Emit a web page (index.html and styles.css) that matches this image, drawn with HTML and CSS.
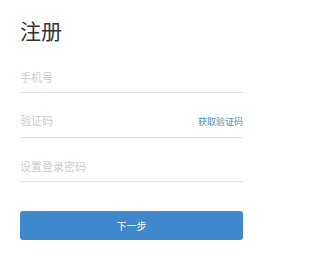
FILE: index.html
```html
<!DOCTYPE html>
<html lang="zh-CN">
<head>
<meta charset="utf-8">
<title>注册</title>
<link rel="stylesheet" href="styles.css">
</head>
<body>
<div class="page">
  <h1 class="title">注册</h1>
  <form class="form">
    <div class="field field-first">
      <input class="input" type="text" placeholder="手机号">
    </div>
    <div class="field">
      <input class="input" type="text" placeholder="验证码">
      <a class="code-link" href="#">获取验证码</a>
    </div>
    <div class="field">
      <input class="input" type="password" placeholder="设置登录密码">
    </div>
    <button class="next-btn" type="button">下一步</button>
  </form>
</div>
</body>
</html>
```

FILE: styles.css
```css
html, body {
  margin: 0;
  padding: 0;
  background: #ffffff;
}
body {
  font-family: "Noto Sans CJK SC", "Noto Sans", sans-serif;
}
.page {
  width: 264px;
  box-sizing: border-box;
  padding: 16px 21px 0 20px;
}
.title {
  margin: 0;
  font-size: 21px;
  line-height: 29px;
  font-weight: 400;
  color: #333333;
}
.form {
  display: flex;
  flex-direction: column;
}
.field {
  display: flex;
  align-items: baseline;
  height: 44.5px;
  box-sizing: border-box;
  padding-bottom: 8px;
  border-bottom: 1px solid #e3e3e3;
  align-content: flex-end;
  flex-wrap: wrap;
}
.field-first {
  height: 48px;
}
.input {
  flex: 1;
  min-width: 0;
  border: none;
  outline: none;
  background: transparent;
  padding: 0;
  margin: 0;
  font-family: inherit;
  font-size: 11px;
  line-height: 14px;
  height: 14px;
  color: #333;
}
.input::placeholder {
  color: #cccccc;
}
.code-link {
  font-size: 9px;
  line-height: 14px;
  color: #3a8fb8;
  text-decoration: none;
}
.next-btn {
  margin-top: 29px;
  height: 29px;
  border: none;
  border-radius: 3px;
  background: #3f88cc;
  color: #ffffff;
  font-family: inherit;
  font-size: 10px;
  padding: 0;
}
```
